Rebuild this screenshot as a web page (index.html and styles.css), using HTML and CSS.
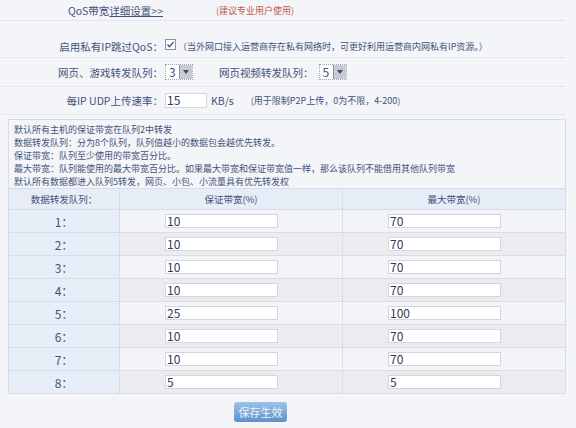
FILE: index.html
```html
<!DOCTYPE html>
<html lang="zh-CN">
<head>
<meta charset="utf-8">
<link rel="stylesheet" href="styles.css">
</head>
<body>
<div class="page">
  <div class="row row-top">
    <div class="label"><span>QoS带宽</span><span class="ul">详细设置&gt;&gt;</span></div>
    <div class="note">(建议专业用户使用)</div>
  </div>
  <div class="row row-ip">
    <div class="label">启用私有IP跳过QoS：</div>
    <svg class="chk" width="11" height="11" viewBox="0 0 11 11"><rect x="0.5" y="0.5" width="10" height="10" fill="#fff" stroke="#8a93a8"/><path d="M2.5 5.5 L4.5 7.8 L8.5 2.8" fill="none" stroke="#3a4a7a" stroke-width="1.3"/></svg>
    <div class="hint">（当外网口接入运营商存在私有网络时，可更好利用运营商内网私有IP资源。）</div>
  </div>
  <div class="row row-q">
    <div class="label">网页、游戏转发队列：</div>
    <div class="sel"><span class="sv">3</span><span class="sa"></span></div>
    <div class="label2">网页视频转发队列：</div>
    <div class="sel"><span class="sv">5</span><span class="sa"></span></div>
  </div>
  <div class="row row-udp">
    <div class="label">每IP UDP上传速率：</div>
    <div class="txt udp">15</div>
    <div class="unit">KB/s</div>
    <div class="hint2">(用于限制P2P上传，0为不限，4-200)</div>
  </div>
  <div class="box">
    <div class="desc">
      <p>默认所有主机的保证带宽在队列2中转发</p>
      <p>数据转发队列：分为8个队列，队列值越小的数据包会越优先转发。</p>
      <p>保证带宽：队列至少使用的带宽百分比。</p>
      <p>最大带宽：队列能使用的最大带宽百分比。如果最大带宽和保证带宽值一样，那么该队列不能借用其他队列带宽</p>
      <p>默认所有数据都进入队列5转发，网页、小包、小流量具有优先转发权</p>
    </div>
    <div class="tbl">
      <div class="th c1">数据转发队列：</div><div class="th c2">保证带宽(%)</div><div class="th c3">最大带宽(%)</div>
      <div class="c1 td">1：</div><div class="td c2"><div class="txt">10</div></div><div class="td c3"><div class="txt">70</div></div>
      <div class="c1 td">2：</div><div class="td c2 alt"><div class="txt">10</div></div><div class="td c3 alt"><div class="txt">70</div></div>
      <div class="c1 td">3：</div><div class="td c2"><div class="txt">10</div></div><div class="td c3"><div class="txt">70</div></div>
      <div class="c1 td">4：</div><div class="td c2 alt"><div class="txt">10</div></div><div class="td c3 alt"><div class="txt">70</div></div>
      <div class="c1 td">5：</div><div class="td c2"><div class="txt">25</div></div><div class="td c3"><div class="txt">100</div></div>
      <div class="c1 td">6：</div><div class="td c2 alt"><div class="txt">10</div></div><div class="td c3 alt"><div class="txt">70</div></div>
      <div class="c1 td">7：</div><div class="td c2"><div class="txt">10</div></div><div class="td c3"><div class="txt">70</div></div>
      <div class="c1 td last">8：</div><div class="td c2 alt last"><div class="txt">5</div></div><div class="td c3 alt last"><div class="txt">5</div></div>
    </div>
  </div>
  <div class="btnrow"><div class="btn">保存生效</div></div>
</div>
</body>
</html>
```
FILE: styles.css
```css
html, body {
  margin: 0;
  padding: 0;
  background: #f4f5f8;
}
body {
  font-family: "Noto Sans CJK SC", "Noto Sans", sans-serif;
  font-size: 11px;
  color: #43527a;
}
.page {
  width: 566px;
  position: relative;
}
.row {
  display: flex;
  align-items: center;
  border-bottom: 1px dotted #d3d8e3;
  margin-right: 1px;
}
.label {
  width: 163px;
  text-align: right;
  font-size: 10.5px;
  white-space: nowrap;
}
.ul {
  text-decoration: underline;
}
.row-top {
  height: 20px;
}
.note {
  margin-left: 53px;
  color: #bb5a50;
  font-size: 9px;
}
.row-ip {
  height: 37px;
  padding-top: 14px;
  box-sizing: border-box;
}
.chk {
  margin-left: 2px;
  margin-top: -4px;
}
.hint {
  font-size: 9px;
  margin-left: 2px;
}
.row-q {
  height: 28px;
}
.sel {
  margin-left: 2px;
  width: 28px;
  height: 16px;
  box-sizing: border-box;
  border: 1px dotted #9aa3b8;
  background: #fff;
  display: flex;
  font-size: 12px;
}
.sv {
  flex: 1;
  padding-left: 3px;
  line-height: 14px;
}
.sa {
  width: 12px;
  background: #c9cbd3;
  border-left: 1px solid #8d93a6;
  position: relative;
}
.sa::after {
  content: "";
  position: absolute;
  left: 3px;
  top: 5px;
  border-left: 3px solid transparent;
  border-right: 3px solid transparent;
  border-top: 4px solid #3a4a7a;
}
.label2 {
  margin-left: 26px;
  margin-right: 3px;
  font-size: 10.5px;
  white-space: nowrap;
}
.row-udp {
  height: 27px;
}
.txt {
  height: 14px;
  width: 113px;
  box-sizing: border-box;
  border: 1px solid #d4d6dc;
  background: #fff;
  font-size: 12px;
  line-height: 12px;
  padding-left: 1px;
  color: #303a5a;
}
.txt.udp {
  width: 42px;
  height: 15px;
  margin-left: 2px;
}
.unit {
  font-size: 10.5px;
  margin-left: 4px;
}
.hint2 {
  font-size: 9px;
  margin-left: 17px;
}
.box {
  margin: 4px 0 0 8px;
  width: 558px;
  border: 1px solid #d6dce8;
  box-sizing: border-box;
}
.desc {
  padding: 3px 0 0 5px;
}
.desc p {
  margin: 0;
  line-height: 13px;
  font-size: 9px;
}
.tbl {
  display: grid;
  grid-template-columns: 111px 223px 222px;
}
.th {
  height: 21px;
  background: #e6edf7;
  text-align: center;
  line-height: 20px;
  font-size: 9.5px;
  border-top: 1px solid #d6dce8;
  box-sizing: border-box;
}
.td {
  height: 23px;
  box-sizing: border-box;
  border-top: 1px solid #d6dce8;
  background: #f2f4f8;
  display: flex;
  align-items: center;
}
.c1.td {
  background: #e7eef8;
  justify-content: center;
  font-size: 12px;
}
.c1 {
  border-right: 1px dotted #c5cfe0;
}
.c2 {
  border-right: 1px dotted #c5cfe0;
}
.td.c2, .td.c3 {
  padding-left: 45px;
}
.td.alt {
  background: #ececee;
}
.btnrow {
  padding: 8px 0 0 234px;
}
.btn {
  width: 53px;
  height: 20px;
  border-radius: 3px;
  background: linear-gradient(#9ec3ea, #5f8fc9);
  color: #eef4fc;
  font-size: 11px;
  text-align: center;
  line-height: 20px;
}
```
